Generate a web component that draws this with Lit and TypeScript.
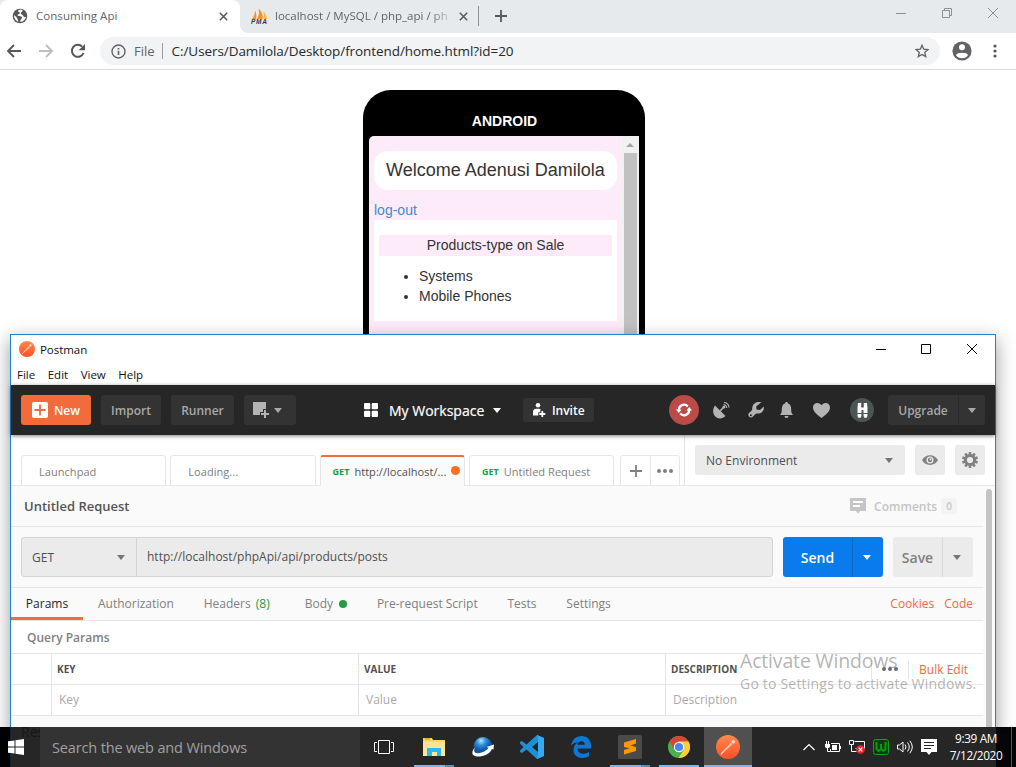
import { LitElement, html, svg, css } from "lit";
import { customElement } from "lit/decorators.js";

const caret = html`<svg class="caret" width="8" height="5" viewBox="0 0 8 5"><path d="M0 0h8L4 5z" fill="currentColor" /></svg>`;

const postmanLogo = (size: number) => html`<svg width=${size} height=${size} viewBox="0 0 24 24">
  <defs><linearGradient id="pm" x1="0" y1="0" x2="0" y2="1"><stop offset="0" stop-color="#ff8a4b" /><stop offset="1" stop-color="#ff4f26" /></linearGradient></defs>
  <circle cx="12" cy="12" r="12" fill="url(#pm)" />
  <path d="M5.200 19l5-5.500" stroke="#ffe3d8" stroke-width="1.200" fill="none" stroke-linecap="round" />
  <path d="M8.500 14.500l6.500-7 1.500 1.500-6.500 6.200z" fill="#ffc9b6" /><circle cx="17.300" cy="6.700" r="1.700" fill="#ffe3d8" />
</svg>`;

@customElement("chrome-window")
class ChromeWindow extends LitElement {
  static styles = css`
    :host { display: flex; flex-direction: column; height: 767px; background: #fff; font-family: "Open Sans", sans-serif; }
    svg { display: block; flex: none; }
    .strip { display: flex; height: 33px; background: #e7eaed; color: #5f6368; font-size: 11.5px; line-height: 32px; }
    .tab { box-sizing: border-box; display: flex; align-items: center; white-space: nowrap; }
    .tab.active { width: 240px; background: #fff; border-radius: 8px 8px 0 0; padding: 0 12px 1px; gap: 8px; position: relative; }
    .flare { position: absolute; right: -8px; bottom: 0; }
    .title { flex: 1; overflow: hidden; }
    .t1 { letter-spacing: 0.05px; }
    .t2 { letter-spacing: 0; flex: none; width: 177px; -webkit-mask-image: linear-gradient(90deg, #000 155px, transparent 180px); }
    .tab.idle { width: 238px; padding: 0 9px 1px 11px; gap: 7px; }
    .sep { width: 1px; height: 20px; margin-top: 6px; background: #8f9296; }
    .plus { margin: 10px 0 0 16px; }
    .winctl { display: flex; gap: 34px; margin: 7px 17px 0 auto; }
    .bar { display: flex; align-items: center; height: 36px; border-bottom: 1px solid #d9dbdd; padding: 0 12px 0 6px; color: #5f6368; }
    .nav { display: flex; gap: 16px; width: 94px; }
    .omni { box-sizing: border-box; width: 840px; height: 28px; border-radius: 14px; background: #f1f3f4; display: flex; align-items: center; padding: 0 11px; font-size: 13px; line-height: 28px; }
    .scheme { margin-left: 8px; letter-spacing: 0; }
    .vbar { width: 1px; height: 16px; background: #9a9da1; margin: 0 9px 0 7px; }
    .url { color: #27292c; font-size: 13.5px; letter-spacing: -0.07px; flex: 1; }
    .avatar { margin-left: 12px; }
    .dots { margin-left: 20.5px; }
    .page { flex: 1; font-family: "Liberation Sans", Arial, sans-serif; font-size: 14px; line-height: 20px; color: #333; padding: 20px 0 0 363px; }
    .phone { box-sizing: border-box; width: 282px; height: 500px; background: #000; border-radius: 28px; padding: 0 6px; }
    .brand { height: 46px; padding: 21px 0 0 1px; box-sizing: border-box; text-align: center; color: #fff; font-weight: bold; }
    .screen { display: flex; height: 430px; background: #fdebfa; border-radius: 5px 0 0 0; overflow: hidden; }
    .content { flex: 1; padding: 15px 5px 0; }
    .welcome { height: 39px; line-height: 38px; box-sizing: border-box; background: #fff; border-radius: 14px; text-align: center; font-size: 18px; white-space: nowrap; }
    .logout { display: block; margin-top: 10px; color: #428bca; }
    .card { box-sizing: border-box; height: 101px; background: #fff; padding: 15px 5px 0; }
    .heading { height: 21px; background: #fdebfa; text-align: center; }
    ul { margin: 10px 0 0; padding-left: 40px; }
    .scroll { width: 17px; padding-left: 1px; box-sizing: border-box; background: #f1f1f1; display: flex; flex-direction: column; align-items: flex-start; }
    .arrow { height: 17px; display: flex; align-items: center; padding-left: 3px; }
    .thumb { width: 13px; margin-left: 1px; flex: 1; background: #c1c1c1; }
  `;
  render() {
    return html`
      <div class="strip">
        <div class="tab active">
          <svg width="16" height="16" viewBox="0 0 16 16"><circle cx="8" cy="8" r="7.300" fill="#54585d" /><path d="M8.800 1.500c-2.800.3-3.500 1.800-2 2.600 1.500.6 1.300 2-.2 2.200C5 6.500 5.300 8 7 8c2.200 0 3.300.8 2.800 2.300-.4 1-1.500 1.400-1.500 3.700 3-.2 5.300-2.400 5.700-5.200-1.400.7-2.500.2-2.800-1-.3-1.400-2.600-1.200-2.400-2.500.1-1 1.400-1.200 2-2.700zM2 7c0 3.500 1.600 5.700 4.300 6.700.2-1.700-1-2.200-1.200-3.500C4.900 8.500 3 8.300 2 7z" fill="#fff" /></svg>
          <span class="title t1">Consuming Api</span>
          <svg width="9" height="9" viewBox="0 0 9 9"><path d="M.8.8l7.400 7.400M8.200.8L.8 8.200" stroke="#54585d" stroke-width="1.500" /></svg>
          <svg class="flare" width="8" height="8" viewBox="0 0 8 8"><path d="M0 0a8 8 0 0 0 8 8H0z" fill="#fff" /></svg>
        </div>
        <div class="tab idle">
          <svg width="17" height="16" viewBox="0 0 17 16"><path d="M1 11C3 9 4 5 4 2.500 5.500 5 5.500 8 5 11zM5.800 11C8 8 8.500 4 7.500.5 11.500 3.500 12 8 11.500 11z" fill="#f7941e" /><path d="M12 11c1.500-3 1-6 0-8 2.500 2 3.800 5 4 8z" fill="#fbb45c" /><text x="0" y="15.500" font-size="6.500" font-weight="bold" font-style="italic" font-family="Liberation Sans" fill="#33356b" textLength="16">PMA</text></svg>
          <span class="title t2">localhost / MySQL / php_api / ph</span>
          <svg width="9" height="9" viewBox="0 0 9 9"><path d="M.8.8l7.400 7.400M8.200.8L.8 8.200" stroke="#54585d" stroke-width="1.500" /></svg>
        </div>
        <div class="sep"></div>
        <svg class="plus" width="12" height="12" viewBox="0 0 12 12"><path d="M6 0v12M0 6h12" stroke="#54585d" stroke-width="1.800" /></svg>
        <div class="winctl">
          <svg width="12" height="12" viewBox="0 0 12 12"><path d="M1 6.500h10" stroke="#8e9194" /></svg>
          <svg width="12" height="12" viewBox="0 0 12 12"><path d="M1.500 3.500h7v7h-7zM3.500 3.500v-2h7v7h-2" stroke="#8e9194" fill="none" /></svg>
          <svg width="12" height="12" viewBox="0 0 12 12"><path d="M1 1l10 10M11 1L1 11" stroke="#8e9194" /></svg>
        </div>
      </div>
      <div class="bar">
        <div class="nav">
          <svg width="16" height="16" viewBox="0 0 16 16"><path d="M15 8H2.500M8 2L2 8l6 6" stroke="#54585d" stroke-width="1.900" fill="none" /></svg>
          <svg width="16" height="16" viewBox="0 0 16 16"><path d="M1 8h12.500M8 2l6 6-6 6" stroke="#bcbec1" stroke-width="1.900" fill="none" /></svg>
          <svg width="16" height="16" viewBox="0 0 16 16"><path d="M13.500 10A6 6 0 1 1 12.200 3.600" stroke="#54585d" stroke-width="2" fill="none" /><path d="M15 1v6.300H8.700z" fill="#54585d" /></svg>
        </div>
        <div class="omni">
          <svg width="15" height="15" viewBox="0 0 15 15"><circle cx="7.500" cy="7.500" r="6.500" stroke="#5f6368" stroke-width="1.400" fill="none" /><path d="M7.500 6.700V11M7.500 4v1.500" stroke="#5f6368" stroke-width="1.600" /></svg>
          <span class="scheme">File</span><span class="vbar"></span>
          <span class="url">C:/Users/Damilola/Desktop/frontend/home.html?id=20</span>
          <svg width="14" height="14" viewBox="0 0 14 14"><path d="M7 1.200l1.700 4 4.300.4-3.300 2.800 1 4.200L7 10.400l-3.700 2.200 1-4.200L1 5.600l4.300-.4z" stroke="#5f6368" stroke-width="1.300" fill="none" /></svg>
        </div>
        <svg class="avatar" width="20" height="20" viewBox="0 0 20 20"><circle cx="10" cy="10" r="9.600" fill="#5f6368" /><circle cx="10" cy="6.300" r="3" fill="#fff" /><path d="M4 14.200c1-3.200 11-3.200 12 0-2.500 4-9.500 4-12 0z" fill="#fff" /></svg>
        <svg class="dots" width="4" height="14" viewBox="0 0 4 14"><circle cx="2" cy="2" r="1.600" fill="#54585d" /><circle cx="2" cy="7" r="1.600" fill="#54585d" /><circle cx="2" cy="12" r="1.600" fill="#54585d" /></svg>
      </div>
      <div class="page">
        <div class="phone">
          <div class="brand">ANDROID</div>
          <div class="screen">
            <div class="content">
              <div class="welcome">Welcome Adenusi Damilola</div>
              <a class="logout">log-out</a>
              <div class="card">
                <div class="heading">Products-type on Sale</div>
                <ul><li>Systems</li><li>Mobile Phones</li></ul>
              </div>
            </div>
            <div class="scroll">
              <div class="arrow"><svg width="8" height="4" viewBox="0 0 8 4"><path d="M0 4h8L4 0z" fill="#a3a3a3" /></svg></div>
              <div class="thumb"></div>
            </div>
          </div>
        </div>
      </div>`;
  }
}

@customElement("postman-window")
class PostmanWindow extends LitElement {
  static styles = css`
    :host { box-sizing: border-box; display: flex; flex-direction: column; border: 1px solid #1883d7; background: #fafafa; font-family: "Open Sans", sans-serif; font-size: 12px; color: #808080; box-shadow: 0 6px 17px 1px rgba(0, 0, 0, 0.36); white-space: nowrap; }
    svg { display: block; flex: none; }
    .titlebar { display: flex; align-items: center; height: 28px; padding: 0 17px 1px 8px; background: #fff; color: #111; }
    .name { margin-left: 5px; font-size: 11.5px; letter-spacing: -0.05px; }
    .ctl { margin-left: auto; display: flex; gap: 34px; }
    .min { margin-right: -1px; }
    .menu { display: flex; gap: 12.5px; height: 21px; line-height: 21px; padding-left: 6px; background: #fff; color: #111; font-size: 11.5px; }
    .head { display: flex; align-items: center; height: 50px; padding: 0 10px; background: #262626; color: #a8a8a8; font-weight: 600; box-shadow: 0 1px 4px rgba(0, 0, 0, 0.5); z-index: 1; box-sizing: border-box; }
    .btn { box-sizing: border-box; height: 30px; border-radius: 3px; background: #333; display: flex; align-items: center; justify-content: center; margin-right: 10px; }
    .new { width: 70px; background: #f26b3a; color: #fff; gap: 6px; }
    .import { width: 60px; } .runner { width: 63px; } .addwin { width: 52px; gap: 4px; padding-right: 5px; }
    .work { display: flex; align-items: center; color: #fff; font-size: 14px; font-weight: 400; margin-left: 58px; gap: 11px; letter-spacing: 0; -webkit-text-stroke: 0.2px #fff; }
    .work .caret { margin-left: -2px; }
    .invite { width: 71px; height: 24px; margin: 0 0 0 22px; color: #fff; gap: 6px; }
    .sync { width: 30px; height: 30px; border-radius: 50%; background: #bc4b48; display: grid; place-items: center; margin-left: 75px; }
    .sat { margin-left: 14px; } .wrench { margin-left: 18px; } .bell { margin-left: 16px; } .heart { margin-left: 20px; }
    .bino { width: 24px; height: 24px; border-radius: 50%; background: #4b5654; display: grid; place-items: center; margin-left: 20px; }
    .upgrade { width: 97px; margin: 0 0 0 auto; justify-content: flex-start; }
    .upgrade .lab { width: 70px; text-align: center; line-height: 31px; height: 30px; border-right: 1px solid #292929; }
    .upgrade .caret { margin-left: 9px; }
    .tabs { display: flex; height: 51px; background: #fff; }
    .tablist { display: flex; align-items: flex-end; gap: 4px; border-right: 1px solid #e4e4e4; background: linear-gradient(#e6e6e6, #e6e6e6) bottom / 100% 1px no-repeat; padding-left: 10px; width: 663px; }
    .tab { box-sizing: border-box; width: 145.300px; height: 31px; border: 1px solid #e6e6e6; border-radius: 3px 3px 0 0; display: flex; align-items: center; padding: 1px 0 0 17px; background: #fff; font-size: 11px; letter-spacing: 0.05px; }
    .tab.on { background: #fafafa; border-top: 2px solid #f26b3a; border-bottom: 0; color: #505050; padding: 0 0 1px 12px; }
    .tab.get { padding-left: 12px; }
    .verb { font-size: 9px; font-weight: 700; color: #249c47; margin-right: 5px; letter-spacing: 0; }
    .dot { width: 9px; height: 9px; border-radius: 50%; background: #f47023; margin: -1px 4px 0 auto; }
    .extra { box-sizing: border-box; display: flex; width: 60px; height: 31px; border: 1px solid #e6e6e6; border-radius: 3px 3px 0 0; margin-left: 2px; }
    .cell { flex: 1; display: grid; place-items: center; }
    .cell:first-child { padding-left: 1px; }
    .cell + .cell { border-left: 1px solid #e6e6e6; }
    .env { flex: 1; display: flex; gap: 10px; padding: 10px; border-bottom: 1px solid #e6e6e6; }
    .select { box-sizing: border-box; width: 210px; height: 30px; border-radius: 3px; background: #ebebeb; display: flex; align-items: center; justify-content: space-between; padding: 1px 12px 0 11px; color: #505050; }
    .select .caret, .method .caret, .save .caret { color: #757575; }
    .sq { width: 30px; height: 30px; border-radius: 3px; background: #ebebeb; display: grid; place-items: center; }
    .body { flex: 1; display: flex; }
    .main { width: 972px; }
    .track { flex: 1; background: #fbfbfb; padding: 3px 0 0 3px; }
    .thumb { width: 6px; height: 260px; border-radius: 3px; background: #c4c4c4; }
    .reqname { display: flex; align-items: center; height: 40px; border-bottom: 1px solid #e6e6e6; padding: 0 26px 0 13px; font-size: 13px; font-weight: 600; color: #555; }
    .comments { margin-left: auto; display: flex; align-items: center; color: #c5c5c5; font-size: 12px; }
    .comments .w { margin: 0 4px 0 8px; }
    .num { width: 16px; height: 16px; line-height: 16px; border-radius: 2px; background: #f3f3f3; text-align: center; font-size: 10px; }
    .urlrow { display: flex; height: 60px; padding: 10px; gap: 10px; box-sizing: border-box; }
    .line { height: 1px; background: #e6e6e6; }
    .box { box-sizing: border-box; display: flex; width: 752px; height: 40px; border: 1px solid #d4d4d4; border-radius: 3px; background: #ebebeb; color: #505050; line-height: 38px; }
    .method { box-sizing: border-box; width: 115px; border-right: 1px solid #d4d4d4; display: flex; align-items: center; justify-content: space-between; padding: 1px 11px 0 10px; font-size: 12px; }
    .addr { padding: 0 0 0 10px; letter-spacing: 0.01px; line-height: 38px; }
    .send, .save { display: flex; height: 40px; border-radius: 3px; font-size: 14px; font-weight: 600; align-items: center; line-height: 42px; }
    .send { width: 100px; background: #097bed; color: #fff; }
    .send .l { width: 69px; text-align: center; border-right: 1px solid #0869cb; height: 40px; }
    .send .caret { margin-left: 10px; }
    .save { width: 80px; background: #ebebeb; color: #808080; }
    .save .l { width: 49px; text-align: center; border-right: 1px solid #dadada; height: 40px; }
    .save .caret { margin-left: 10px; }
    .subtabs { display: flex; height: 32px; line-height: 32px; border-bottom: 1px solid #e6e6e6; padding-right: 10px; }
    .st { margin-right: 29.800px; }
    .st.p { box-sizing: border-box; width: 72px; text-align: center; color: #262626; border-bottom: 3px solid #f26b3a; margin-right: 15px; }
    .st.h { margin-right: 35px; }
    .st.b { display: flex; align-items: center; gap: 6px; }
    .green { color: #249c47; margin-left: 2px; }
    .gdot { width: 8px; height: 8px; border-radius: 50%; background: #249c47; }
    .links { margin-left: auto; display: flex; gap: 10px; color: #f26b3a; }
    .qp { height: 32px; line-height: 33px; padding-left: 16px; background: #fff; font-weight: 600; color: #808080; border-bottom: 1px solid #e6e6e6; }
    .row { display: grid; grid-template-columns: 40px 307px 307px 318px; height: 30px; line-height: 30px; background: #fff; border-bottom: 1px solid #e6e6e6; color: #a9a9a9; }
    .row > div + div { border-left: 1px solid #e6e6e6; padding-left: 7px; }
    .row.hd { font-size: 10px; font-weight: 700; color: #505050; line-height: 31px; }
    .row.hd > div + div { padding-left: 5px; }
    .desc { display: flex; align-items: flex-start; height: 30px; }
    .more { box-sizing: border-box; display: flex; align-items: center; height: 18px; border-left: 1px solid #e6e6e6; border-right: 1px solid #e6e6e6; width: 38px; padding: 0 0 3px 10px; margin: 7px 0 0 auto; }
    .bulk { color: #f26b3a; font-size: 12px; font-weight: 400; margin: 0 15px 0 10px; line-height: 31px; }
  `;
  render() {
    const dots = (c: string) => html`<svg width="16" height="4" viewBox="0 0 16 4"><circle cx="2" cy="2" r="2" fill=${c} /><circle cx="8" cy="2" r="2" fill=${c} /><circle cx="14" cy="2" r="2" fill=${c} /></svg>`;
    return html`
      <div class="titlebar">
        ${postmanLogo(16)}<span class="name">Postman</span>
        <div class="ctl">
          <svg class="min" width="12" height="12" viewBox="0 0 12 12"><path d="M1 6.500h10" stroke="#000" /></svg>
          <svg width="12" height="12" viewBox="0 0 12 12"><path d="M1.500 1.500h9v9h-9z" stroke="#000" fill="none" /></svg>
          <svg width="12" height="12" viewBox="0 0 12 12"><path d="M1 1l10 10M11 1L1 11" stroke="#000" /></svg>
        </div>
      </div>
      <div class="menu">${["File", "Edit", "View", "Help"].map((m) => html`<span>${m}</span>`)}</div>
      <div class="head">
        <div class="btn new"><svg width="16" height="16" viewBox="0 0 16 16"><rect width="16" height="16" rx="2" fill="#fff" /><path d="M8 2.500v11M2.500 8h11" stroke="#f26b3a" stroke-width="1.800" /></svg>New</div>
        <div class="btn import">Import</div>
        <div class="btn runner">Runner</div>
        <div class="btn addwin"><svg width="17" height="16" viewBox="0 0 17 16"><path d="M0 0h13v7h-3v3H7v3H0z" fill="#b3b3b3" /><path d="M12 8v8M8 12h8" stroke="#b3b3b3" stroke-width="2" /></svg>${caret}</div>
        <div class="work"><svg width="14" height="14" viewBox="0 0 14 14"><rect width="6.300" height="6.300" rx="1" fill="#fff" /><rect x="7.700" width="6.300" height="6.300" rx="1" fill="#fff" /><rect y="7.700" width="6.300" height="6.300" rx="1" fill="#fff" /><rect x="7.700" y="7.700" width="6.300" height="6.300" rx="1" fill="#fff" /></svg>My Workspace${caret}</div>
        <div class="btn invite"><svg width="13" height="14" viewBox="0 0 13 14"><circle cx="5" cy="2.300" r="2.300" fill="#fff" /><path d="M0 12.500V9c0-2.800 2-3.300 5-3.300 1.500 0 2.500.5 3 1.300H7.300v2.300H5.300V12.500z" fill="#fff" /><path d="M9.300 8v6M6.300 11h6" stroke="#fff" stroke-width="1.800" /></svg>Invite</div>
        <div class="sync"><svg width="16" height="16" viewBox="0 0 16 16"><path d="M2.800 8A5.200 5.200 0 0 1 11.800 4.400M13.200 8A5.200 5.200 0 0 1 4.200 11.600" stroke="#fff" stroke-width="2.200" fill="none" /><path d="M0 7.500h5.600L2.800 11zM10.400 8.500H16L13.200 5z" fill="#fff" /></svg></div>
        <svg class="sat" width="17" height="17" viewBox="0 0 17 17"><path d="M2 3.500l10.500 10.500C9 17.500 4 17 1.500 13.500-.5 10.500-.2 6.500 2 3.500z" fill="#b3b3b3" /><path d="M7 9l3.500-3.500" stroke="#b3b3b3" stroke-width="1.600" /><circle cx="10.800" cy="5.200" r="1.400" fill="#b3b3b3" /><path d="M10.500 2.500a4 4 0 0 1 3.300 3.500M11 .5a5.500 5.500 0 0 1 5 5" stroke="#b3b3b3" stroke-width="1.100" fill="none" /></svg>
        <svg class="wrench" width="16" height="16" viewBox="0 0 16 16"><path d="M13.500 0C9 -1 4.500 1.500 4.200 6c0 1 .1 1.800-.5 2.400L.8 11.300c-1.800 2 1.300 5.500 3.700 3.800l3-3c.8-.7 1.500-.6 2.500-.6 3.500 0 6.500-3 5.800-7L12 8 8.500 7.500 8.200 4.500z" fill="#b3b3b3" /><circle cx="2.900" cy="13.200" r="1" fill="#262626" /></svg>
        <svg class="bell" width="13" height="16" viewBox="0 0 13 16"><path d="M6.500 0C7.300 0 8 .6 8 1.500c2.500.8 3.200 3 3.200 6 0 2.500.3 4 1.800 5.500H0c1.500-1.500 1.800-3 1.800-5.500 0-3 .7-5.200 3.200-6C5 .6 5.700 0 6.500 0zM4.500 14h4a2 2 0 0 1-4 0z" fill="#b3b3b3" /></svg>
        <svg class="heart" width="17" height="15" viewBox="0 0 17 15"><path d="M8.500 15C4 11.500 0 8.500 0 4.500 0 1.500 2 0 4.300 0 6.300 0 7.800 1.200 8.500 2.200 9.200 1.200 10.700 0 12.700 0 15 0 17 1.500 17 4.500c0 4-4 7-8.500 10.500z" fill="#b3b3b3" /></svg>
        <div class="bino"><svg width="11" height="15" viewBox="0 0 11 15"><path d="M1 0h3.200v4.500h2.600V0H10l.5 5v5H6.500V7h-2v3H.5V5z" fill="#fff" /><path d="M.5 11h4c0 3-.8 4-2 4s-2-1-2-4zM6.500 11h4c0 3-.8 4-2 4s-2-1-2-4z" fill="#fff" /></svg></div>
        <div class="btn upgrade"><span class="lab">Upgrade</span>${caret}</div>
      </div>
      <div class="tabs">
        <div class="tablist">
          <div class="tab">Launchpad</div>
          <div class="tab">Loading...</div>
          <div class="tab on"><span class="verb">GET</span>http://localhost/...<span class="dot"></span></div>
          <div class="tab get"><span class="verb">GET</span>Untitled Request</div>
          <div class="extra">
            <div class="cell"><svg width="12" height="12" viewBox="0 0 12 12"><path d="M6 0v12M0 6h12" stroke="#808080" stroke-width="1.800" /></svg></div>
            <div class="cell">${dots("#808080")}</div>
          </div>
        </div>
        <div class="env">
          <div class="select">No Environment${caret}</div>
          <div class="sq"><svg width="16" height="10" viewBox="0 0 16 10"><path d="M0 5c3.500-6.500 12.500-6.500 16 0-3.500 6.500-12.500 6.500-16 0z" fill="#808080" /><circle cx="8" cy="5" r="3.500" fill="#ebebeb" /><circle cx="8" cy="5" r="2.200" fill="#808080" /><circle cx="8.500" cy="4.400" r=".9" fill="#ebebeb" /></svg></div>
          <div class="sq"><svg width="16" height="16" viewBox="-8 -8 16 16"><circle r="4.600" fill="none" stroke="#808080" stroke-width="3" />${[0, 36, 72, 108, 144, 180, 216, 252, 288, 324].map((a) => svg`<rect x="-1.300" y="-8" width="2.600" height="3" fill="#808080" transform="rotate(${a})" />`)}</svg></div>
        </div>
      </div>
      <div class="body">
        <div class="main">
          <div class="reqname">Untitled Request
            <div class="comments"><svg width="16" height="16" viewBox="0 0 16 16"><path d="M0 0h16v13h-6l-2 2.700L6 13H0z" fill="#c5c5c5" /><path d="M3 4h10M3 8h7" stroke="#fff" stroke-width="2" /></svg><span class="w">Comments</span><span class="num">0</span></div>
          </div>
          <div class="urlrow">
            <div class="box"><div class="method">GET${caret}</div><div class="addr">http://localhost/phpApi/api/products/posts</div></div>
            <div class="send"><div class="l">Send</div>${caret}</div>
            <div class="save"><div class="l">Save</div>${caret}</div>
          </div>
          <div class="line"></div>
          <div class="subtabs">
            <div class="st p">Params</div><div class="st">Authorization</div><div class="st h">Headers <span class="green">(8)</span></div>
            <div class="st b">Body<span class="gdot"></span></div><div class="st">Pre-request Script</div><div class="st">Tests</div><div class="st">Settings</div>
            <div class="links"><span>Cookies</span><span>Code</span></div>
          </div>
          <div class="qp">Query Params</div>
          <div class="row hd"><div></div><div>KEY</div><div>VALUE</div><div class="desc">DESCRIPTION<div class="more">${dots("#6b6b6b")}</div><span class="bulk">Bulk Edit</span></div></div>
          <div class="row"><div></div><div>Key</div><div>Value</div><div>Description</div></div>
        </div>
        <div class="track"><div class="thumb"></div></div>
      </div>`;
  }
}

@customElement("task-bar")
class TaskBar extends LitElement {
  static styles = css`
    :host { display: flex; background: linear-gradient(90deg, #000105 10px, #12212f 10px, #12212f 11px, #262626 11px, #262626 995px, #12273b 995px, #12273b 996px, #050508 996px); height: 40px; font-family: "Open Sans", sans-serif; }
    svg { display: block; flex: none; }
    .start { width: 40px; display: flex; align-items: center; overflow: hidden; position: relative; }
    .start svg { margin-left: 8px; }
    .ghost { position: absolute; left: 21px; top: -5px; font-size: 14px; line-height: 20px; color: #171717; }
    .search { box-sizing: border-box; width: 320px; background: #333; color: #a0a0a0; font-size: 14.500px; line-height: 41px; padding-left: 12px; letter-spacing: -0.15px; white-space: nowrap; }
    .apps { display: grid; grid-template-columns: 49px repeat(7, 49px); width: 392px; }
    .app { position: relative; display: grid; place-items: center; }
    .app:first-child { padding-right: 1px; }
    .app.on { background: #505050; margin-left: 1px; }
    .under { position: absolute; left: 5px; bottom: 0; width: 40px; height: 2px; background: #76b9ed; }
    .under.two { background: linear-gradient(90deg, #76b9ed 31px, #4f7a9c 31px, #5d8fb8 32px); }
    .under.full { left: 0; width: 48px; }
    .tray { display: flex; align-items: center; margin-left: auto; gap: 8px; }
    .up { margin-right: 1px; }
    .clock { width: 58px; margin-left: 2px; color: #fff; font-size: 11.800px; line-height: 17px; letter-spacing: -0.35px; white-space: nowrap; display: flex; flex-direction: column; align-items: center; padding-bottom: 1px; }
    .edge { width: 1px; height: 40px; background: #55565a; margin: 0 4px 0 -2px; }
  `;
  render() {
    return html`
      <div class="start"><span class="ghost">Res</span><svg width="16" height="16" viewBox="0 0 16 16"><path d="M0 2.300L6.500 1.400V7.500H0zM7.500 1.200L16 0v7.500H7.500zM0 8.500h6.500v6.100L0 13.700zM7.500 8.500H16V16l-8.500-1.200z" fill="#fff" /></svg></div>
      <div class="search">Search the web and Windows</div>
      <div class="apps">
        <div class="app"><svg width="20" height="14" viewBox="0 0 20 14"><path d="M4.500.5h11v13h-11zM3 2.500H.5v9H3M17 2.500h2.500v9H17" stroke="#fff" fill="none" /></svg></div>
        <div class="app"><svg width="22" height="18" viewBox="0 0 22 18"><path d="M0 0h9l1 2h12v16H0z" fill="#fdd663" /><path d="M0 4h22v14H0z" fill="#ffe497" /><path d="M2 1h5" stroke="#c58b1b" /><path d="M4 10h14v8h-4v-4H9v4H4z" fill="#2cb9f2" /></svg><i class="under two"></i></div>
        <div class="app"><svg width="22" height="20" viewBox="0 0 22 20"><defs><radialGradient id="gl" cx=".4" cy=".2"><stop offset="0" stop-color="#b6e2fa" /><stop offset=".5" stop-color="#308fd7" /><stop offset="1" stop-color="#0b5baa" /></radialGradient></defs><circle cx="11" cy="9.300" r="9.300" fill="url(#gl)" /><path d="M2.500 10.500C-2 17 1 20 8 19.500c6-.7 10.500-4 12-7.500l1.500.5L22 7.500l-7.500 2.500 2 .8C14 15 6 17.500 3.200 15.500 2 14.500 2.200 12.500 2.500 10.500z" fill="#fff" /></svg></div>
        <div class="app"><svg width="24" height="24" viewBox="0 0 24 24"><path d="M17 0l7 3v18l-7 3L6.500 14.500 2 18 0 17V15.500L3.500 12 0 8.500V7l2-1 4.500 3.500zM18 7l-6 5 6 5z" fill="#1f8fd6" fill-rule="evenodd" /><path d="M17 0l7 3v18l-7 3 1-4V4z" fill="#35a9f1" /></svg></div>
        <div class="app"><svg width="20" height="22" viewBox="0 0 20 22"><path d="M0 10C1 3.500 5 0 10.500 0 16.500 0 20 4 20 10v2.500H6.500c.2 6 7 6.500 11.500 3.500v4.300C11 24 2.500 21.500 2.500 14 2.500 10 4.500 7.500 7.500 6 4.500 6.300 1.500 7.500 0 10zM6.500 8.800h7.300C13.800 4 7 4.200 6.500 8.800z" fill="#0b78d7" fill-rule="evenodd" /></svg></div>
        <div class="app"><svg width="24" height="24" viewBox="0 0 24 24"><rect width="24" height="24" rx="1.500" fill="#4a4a4a" /><path d="M6 7.500L18 4v4.500L12.500 10.500 18 12v4L6 19.500V15l5.500-1.700L6 12z" fill="#ff9800" /></svg><i class="under two"></i></div>
        <div class="app"><svg width="22" height="22" viewBox="0 0 22 22"><circle cx="11" cy="11" r="11" fill="#4caf50" /><path d="M1.500 5.500A11 11 0 0 1 20.500 5.500H11L6.200 13.800z" fill="#dc4437" /><path d="M20.500 5.500A11 11 0 0 1 10.500 22l5.300-8.200L11 5.500z" fill="#fdcd3b" /><circle cx="11" cy="11" r="5.200" fill="#fff" /><circle cx="11" cy="11" r="4.100" fill="#4587f3" /></svg><i class="under"></i></div>
        <div class="app on">${postmanLogo(24)}<i class="under full"></i></div>
      </div>
      <div class="tray">
        <svg class="up" width="14" height="8" viewBox="0 0 14 8"><path d="M1.500 7L7 1.500 12.500 7" stroke="#fff" stroke-width="1.200" fill="none" /></svg>
        <svg width="16" height="12" viewBox="0 0 16 12"><path d="M6 2.500h8.500v8h-9V8M15.500 5v3" stroke="#fff" fill="none" /><path d="M7 4h5v5H7zM0 3h5v2c0 3-5 3-5 0z" fill="#fff" /><path d="M1.500 0v3M3.500 0v3M2.500 7v3.500h3" stroke="#fff" fill="none" /></svg>
        <svg width="16" height="14" viewBox="0 0 16 14"><path d="M5.500 1.500h10v7h-9M.5.500h4v4h-4zM2.500 4.500v7h5" stroke="#fff" fill="none" /><circle cx="11.500" cy="9.500" r="4.400" fill="#e0242d" /><path d="M9.700 7.700l3.600 3.600M13.300 7.700l-3.600 3.600" stroke="#fff" stroke-width="1.200" /></svg>
        <svg width="16" height="16" viewBox="0 0 16 16"><rect x=".5" y=".5" width="15" height="15" rx="2" fill="#023f05" stroke="#12a017" /><path d="M3.500 3v7l2 2L8 10l2.500 2 2-2V3M8 5v5" stroke="#0d9a14" stroke-width="2" fill="none" /></svg>
        <svg width="16" height="14" viewBox="0 0 16 14"><path d="M.5 5v4h2L6 12V2L2.500 5z" stroke="#fff" fill="none" /><path d="M8 4.500q2 2.500 0 5M10.500 2.500q3.500 4.500 0 9M12.800.8q5 6.200 0 12.400" stroke="#fff" fill="none" /></svg>
        <svg width="16" height="16" viewBox="0 0 16 16"><path d="M0 0h16v13h-5.500L8 16l-2.500-3H0z" fill="#fff" /><path d="M3 3.500h10M3 6.500h10M3 9.500h7" stroke="#262626" /></svg>
        <div class="clock"><div>9:39 AM</div><div>7/12/2020</div></div>
        <div class="edge"></div>
      </div>`;
  }
}

@customElement("app-root")
class AppRoot extends LitElement {
  static styles = css`
    :host { display: block; position: relative; width: 1016px; height: 767px; overflow: hidden; }
    .postman { position: absolute; left: 10px; top: 334px; width: 986px; height: 440px; }
    .taskbar { position: absolute; left: 0; right: 0; bottom: 0; z-index: 3; }
    .activate { position: absolute; left: 740px; top: 648px; z-index: 2; font-family: "Open Sans", sans-serif; color: rgba(130, 130, 130, 0.6); white-space: nowrap; }
    .big { font-size: 19.500px; line-height: 26px; letter-spacing: -0.17px; }
    .small { font-size: 14px; line-height: 20px; letter-spacing: 0.2px; }
  `;
  render() {
    return html`
      <chrome-window></chrome-window>
      <postman-window class="postman"></postman-window>
      <div class="activate"><div class="big">Activate Windows</div><div class="small">Go to Settings to activate Windows.</div></div>
      <task-bar class="taskbar"></task-bar>`;
  }
}
